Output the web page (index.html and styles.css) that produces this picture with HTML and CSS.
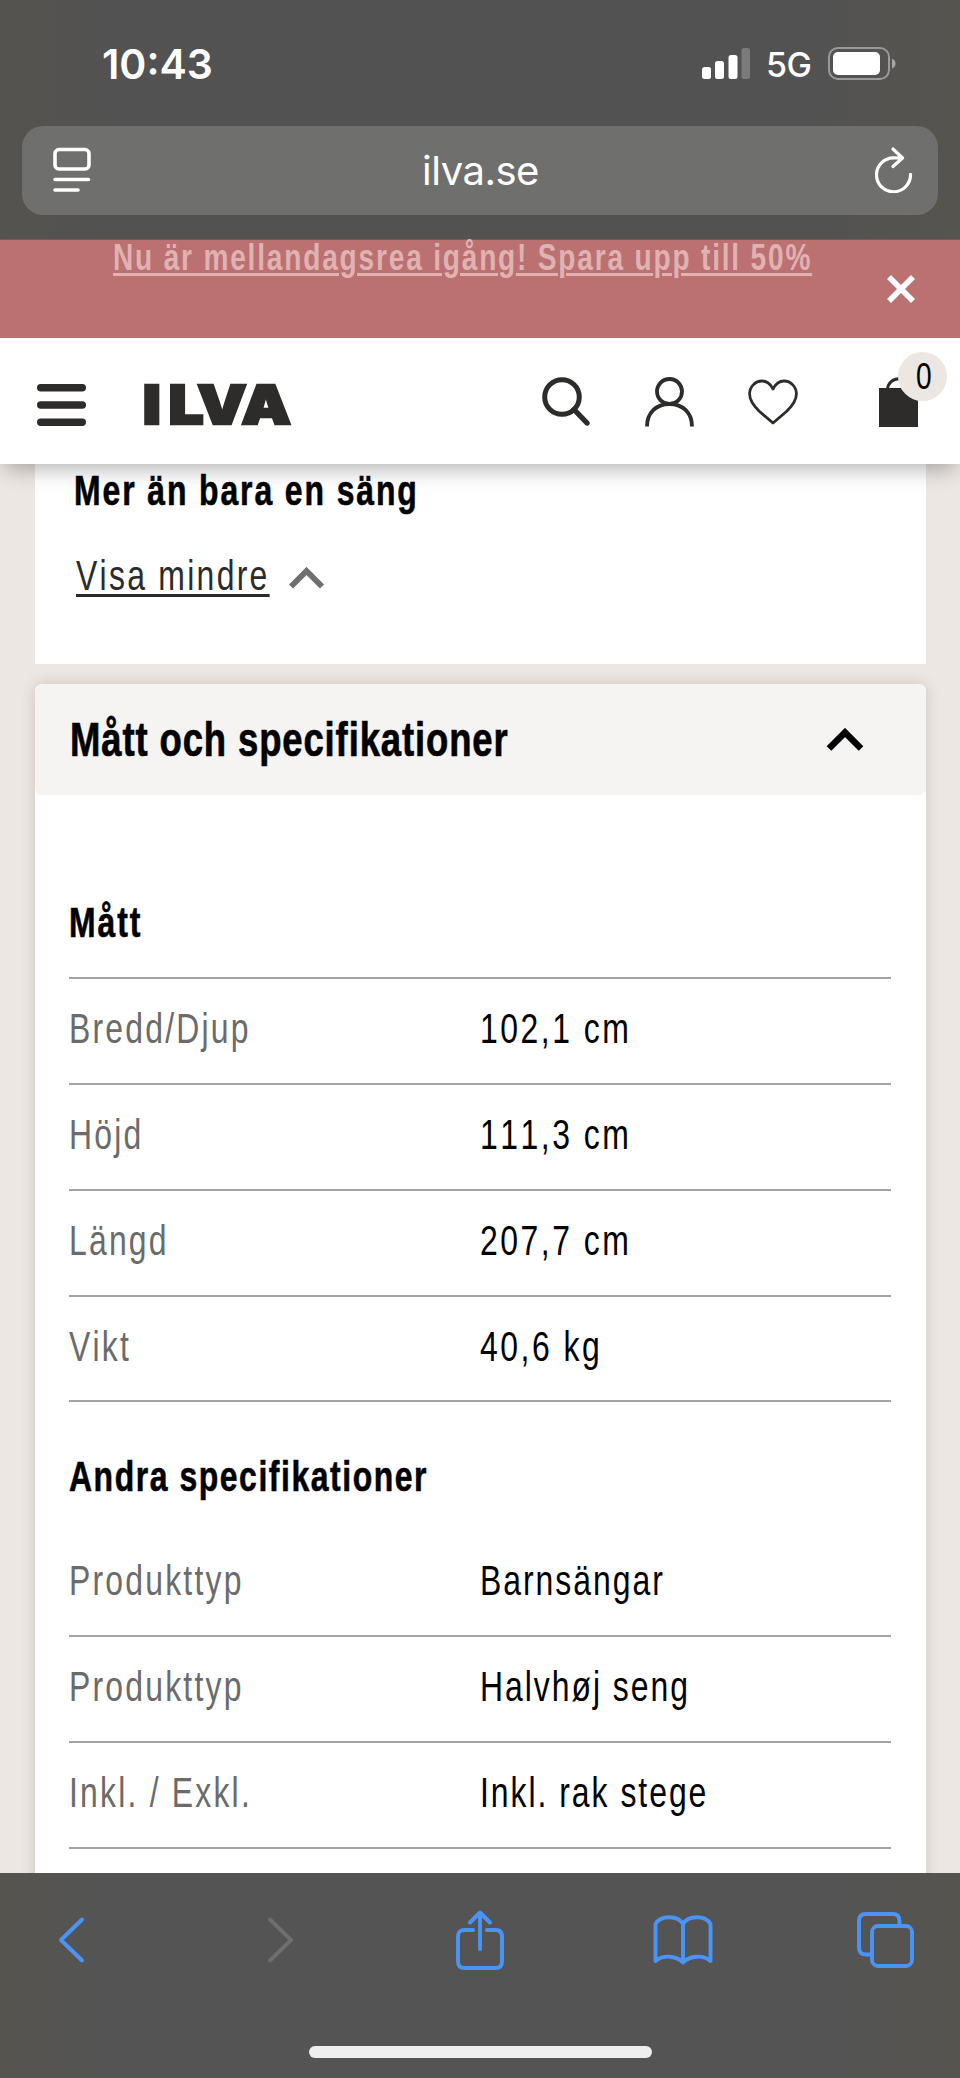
FILE: index.html
```html
<!DOCTYPE html>
<html lang="sv">
<head>
<meta charset="utf-8">
<title>ILVA – Mått och specifikationer</title>
<link rel="stylesheet" href="styles.css">
</head>
<body>
<div class="phone">
  <div class="browser-top">
    <div class="status">
      <span class="clock">10:43</span>
      <svg class="signal" width="49" height="32" viewBox="0 0 49 32">
        <g fill="#fff"><rect x="0" y="19" width="9" height="12" rx="2.5"/><rect x="13" y="13" width="9" height="18" rx="2.5"/><rect x="26.500" y="7" width="9" height="24" rx="2.500"/></g>
        <rect x="39.500" y="0" width="8.500" height="31" rx="2.500" fill="#7b7b7b"/>
      </svg>
      <span class="net">5G</span>
      <svg class="battery" width="68" height="34" viewBox="0 0 68 34">
        <rect x="1" y="1" width="60" height="31" rx="9" fill="none" stroke="#9a9a9a" stroke-width="2"/>
        <rect x="5" y="5" width="47" height="23" rx="5" fill="#fff"/>
        <path d="M64 11.500Q67.500 13 67.500 16.500T64 21.500Z" fill="#a5a5a5"/>
      </svg>
    </div>
    <div class="address">
      <svg width="38" height="46" viewBox="0 0 38 46" fill="none" stroke="#fff" stroke-width="3.600" stroke-linecap="round">
        <rect x="2" y="2.500" width="34" height="19.500" rx="4"/><path d="M2 32.500H35.500M2 43H25"/>
      </svg>
      <span class="url">ilva.se</span>
      <svg width="38" height="46" viewBox="0 0 38 46" fill="none" stroke="#fff" stroke-width="3.200" stroke-linecap="round" stroke-linejoin="round">
        <path d="M35.500 27.300A17 17 0 1 1 18.500 10.800L27 11M18 2L27.500 11L18 19.500"/>
      </svg>
    </div>
  </div>

  <div class="banner">
    <a class="banner-link narrow">Nu är mellandagsrea igång! Spara upp till 50%</a>
    <svg class="banner-close" width="30" height="30" viewBox="0 0 30 30"><path d="M3 3L27 27M27 3L3 27" stroke="#fff" stroke-width="5.600"/></svg>
  </div>

  <header class="header">
    <svg class="menu" width="49" height="42" viewBox="0 0 49 42" stroke="#2d2c2a" stroke-width="7.400" stroke-linecap="round"><path d="M3.700 3.700H45.300M3.700 21H45.300M3.700 38.300H45.300"/></svg>
    <svg class="logo" width="150" height="44" viewBox="0 0 150 44" aria-label="ILVA">
      <text transform="scale(1.15 1)" x="-2 20.500 45.500 84" y="41" class="logo-text">ILVA</text>
    </svg>
    <svg class="search" width="48" height="50" viewBox="0 0 48 50" fill="none" stroke="#2d2c2a"><circle cx="20" cy="20" r="17.300" stroke-width="5"/><path d="M32 32.500L45 46" stroke-width="5.400" stroke-linecap="round"/></svg>
    <svg class="user" width="49" height="50" viewBox="0 0 49 50" fill="none" stroke="#2d2c2a" stroke-width="3.800"><circle cx="24.500" cy="14.500" r="12.500"/><path d="M2 49.500C2 36 11 27 24.500 27S47 36 47 49.500"/></svg>
    <svg class="heart" width="50" height="46" viewBox="0 0 50 46" fill="none" stroke="#2d2c2a" stroke-width="2.800" stroke-linejoin="round"><path d="M25 10C22 4 18 2 14 2C7 2 1.600 8 1.600 15C1.600 22 6 27 11 32L25 44L39 32C44 27 48.400 22 48.400 15C48.400 8 43 2 36 2C32 2 28 4 25 10Z"/></svg>
    <div class="cart">
      <svg width="40" height="50" viewBox="0 0 40 50"><path d="M8.500 12C9 6 14 1.700 20 1.700S31 6 31.500 12" fill="none" stroke="#2d2c2a" stroke-width="3"/><rect x="0" y="11" width="39" height="39" fill="#2d2c2a"/></svg>
      <span class="badge"><span class="narrow badge-num">0</span></span>
    </div>
  </header>

  <main class="content">
    <section class="intro">
      <h3 class="heading narrow">Mer än bara en säng</h3>
      <div class="toggle">
        <a class="toggle-link narrow">Visa mindre</a>
        <svg class="toggle-arrow" width="36" height="22" viewBox="0 0 36 22"><path d="M2 19.500L17.500 4L33 19.500" fill="none" stroke="#6f6f6f" stroke-width="5.800"/></svg>
      </div>
    </section>
    <section class="specs">
      <div class="specs-head">
        <h2 class="specs-title narrow">Mått och specifikationer</h2>
        <svg width="38" height="24" viewBox="0 0 38 24"><path d="M3 20.500L19 4.500L35 20.500" fill="none" stroke="#000" stroke-width="6.600"/></svg>
      </div>
      <div class="specs-body">
        <h3 class="heading first narrow">Mått</h3>
        <dl class="table ruled">
          <div class="row"><dt><span class="narrow">Bredd/Djup</span></dt><dd><span class="narrow">102,1 cm</span></dd></div>
          <div class="row"><dt><span class="narrow">Höjd</span></dt><dd><span class="narrow">111,3 cm</span></dd></div>
          <div class="row"><dt><span class="narrow">Längd</span></dt><dd><span class="narrow">207,7 cm</span></dd></div>
          <div class="row"><dt><span class="narrow">Vikt</span></dt><dd><span class="narrow">40,6 kg</span></dd></div>
        </dl>
        <h3 class="heading second narrow">Andra specifikationer</h3>
        <dl class="table">
          <div class="row"><dt><span class="narrow">Produkttyp</span></dt><dd><span class="narrow">Barnsängar</span></dd></div>
          <div class="row"><dt><span class="narrow">Produkttyp</span></dt><dd><span class="narrow">Halvhøj seng</span></dd></div>
          <div class="row"><dt><span class="narrow">Inkl. / Exkl.</span></dt><dd><span class="narrow">Inkl. rak stege</span></dd></div>
        </dl>
      </div>
    </section>
  </main>

  <nav class="toolbar">
    <div class="tools">
      <svg width="27" height="46" viewBox="0 0 27 46"><path d="M24 2.500L3 23L24 43.500"/></svg>
      <svg class="forward" width="27" height="46" viewBox="0 0 27 46"><path d="M3 2.500L24 23L3 43.500"/></svg>
      <svg class="share" width="48" height="60" viewBox="0 0 48 60"><path d="M17 20H8.500Q2 20 2 26.500V51.500Q2 58 8.500 58H39.500Q46 58 46 51.500V26.500Q46 20 39.500 20H31M24 39V3M14 12.500L24 2.500L34 12.500"/></svg>
      <svg class="book" width="60" height="50" viewBox="0 0 60 50"><path d="M30 9C25 .5 8 -.5 2.500 9V46C9 40 23 40 30 47.500C37 40 51 40 57.500 46V9C52 -.5 35 .5 30 9V47"/></svg>
      <svg class="tabs" width="57" height="56" viewBox="0 0 57 56"><rect x="15" y="14" width="40" height="40" rx="6"/><path d="M15 42.500H9Q2 42.500 2 35.500V9Q2 2 9 2H35.500Q42.500 2 42.500 9V14"/></svg>
    </div>
    <div class="home"></div>
  </nav>
</div>
</body>
</html>
```
FILE: styles.css
```css
* { box-sizing: border-box; }
body { margin: 0; background: #ece7e3; font-family: "Liberation Sans", Arial, sans-serif; }
svg { display: block; flex: none; }
h2, h3, dl, dd { margin: 0; }

.phone { width: 960px; height: 2078px; display: flex; flex-direction: column; overflow: hidden; }

/* Condensed lettering: glyphs are squeezed horizontally from the left edge */
.narrow {
  display: inline-block;
  width: max-content;
  white-space: nowrap;
  transform: scaleX(.76);
  transform-origin: 0 50%;
  letter-spacing: 2.6px;
  font-kerning: none;
}

.browser-top {
  height: 240px; flex: none; padding: 0 22px;
  background: linear-gradient(90deg, #55534f 0, #525252 12%, #525252 84%, #56544f 100%);
  border-bottom: 1px solid #75595b;
  color: #fff; font-family: Inter, sans-serif;
}
.status { height: 125.500px; padding: 0 42px 0 80px; display: flex; align-items: flex-start; }
.clock { font-size: 41px; font-weight: 600; line-height: 50px; margin-top: 39px; }
.signal { margin: 48px 0 0 auto; }
.net { width: 44px; margin: 44px 18px 0 15px; font-size: 34px; font-weight: 500; line-height: 42px; white-space: nowrap; letter-spacing: -.5px; }
.battery { margin-top: 47px; }
.address {
  height: 89.500px; padding: 0 25px 0 31px; border-radius: 21px; background: #6f6f6e;
  display: flex; align-items: center; justify-content: space-between;
}
.url { font-size: 40px; line-height: 50px; letter-spacing: -.5px; margin: 2px 5px 0 0; }

.banner { position: relative; z-index: 2; height: 98px; flex: none; background: #bb7071; display: flex; justify-content: space-between; padding: 0 44px 0 113px; }
.banner-link {
  width: 700px; height: 40px; margin-top: -3px;
  font-size: 37px; font-weight: 700; line-height: 42px; color: #e0b2b2; letter-spacing: 2.350px;
  text-decoration: underline; text-decoration-thickness: 2.500px; text-underline-offset: 3px;
}
.banner-close { margin-top: 34px; }

.header {
  position: relative; z-index: 1; height: 125.500px; flex: none; background: #fff;
  display: flex; align-items: flex-start; padding: 39px 38px 0 37px;
  box-shadow: 0 10px 20px -5px rgba(0, 0, 0, .3);
}
.menu { margin-top: 7px; }
.logo { margin: 6px 0 0 59px; overflow: visible; }
.logo-text { font: 900 54px Inter, sans-serif; fill: #2d2c2a; stroke: #2d2c2a; stroke-width: 2.500px; }
.search { margin-left: 247px; }
.user { margin-left: 55px; }
.heart { margin: 2px 0 0 54px; }
.cart { position: relative; margin-left: 81px; }
.badge {
  position: absolute; left: 19px; top: -25px; width: 49px; height: 49px;
  border-radius: 50%; background: #ece7e3; padding-left: 18px;
}
.badge-num { font-size: 37px; line-height: 49px; }

.content { flex: 1; min-height: 0; overflow: hidden; background: #ece7e3; padding: 0 34.500px; }
.intro { height: 200.500px; background: #fff; padding: 2px 42px 0 39.500px; }
.heading { display: block; font-size: 42px; line-height: 50px; font-weight: 700; color: #000; letter-spacing: 2.500px; -webkit-text-stroke: .6px #000; }
.toggle { display: flex; margin-top: 35.500px; padding-left: 2px; }
.toggle-link {
  width: 213px; font-size: 42px; line-height: 50px; color: #2b2b2b; letter-spacing: 3px;
  text-decoration: underline; text-decoration-thickness: 2.500px; text-underline-offset: 4px;
}
.toggle-arrow { margin-top: 16px; }

.specs { margin-top: 20px; height: 1300px; background: #fff; border-radius: 7px; box-shadow: 0 0 14px rgba(80, 60, 45, .2); }
.specs-head {
  height: 111px; background: #f6f4f2; border-radius: 7px; padding: 0 62px 0 35px;
  display: flex; align-items: center; justify-content: space-between;
}
.specs-title { font-size: 48px; line-height: 60px; color: #000; letter-spacing: 1.150px; -webkit-text-stroke: .7px #000; }
.specs-body { padding: 0 34.500px; }
.heading.first { padding-top: 103px; height: 182px; }
.heading.second { height: 79px; margin-top: 50px; letter-spacing: 2.050px; }
.table { display: block; }
.ruled { border-top: 2px solid #a3a3a3; }
.row {
  display: grid; grid-template-columns: 1fr 1fr; height: 105.850px;
  border-bottom: 2px solid #a3a3a3; font-size: 42px; line-height: 100px;
}
dt { color: #6b6b6b; }
dt .narrow { letter-spacing: 2.900px; }
dd { color: #000; }
.ruled dd .narrow { letter-spacing: 3.300px; }

.toolbar { height: 205.500px; flex: none; background: linear-gradient(90deg, #56544f 0, #545454 10%, #545454 88%, #56544f 100%); }
.tools { height: 134px; padding-left: 58px; display: flex; align-items: center; }
.tools svg { fill: none; stroke: #4a94f8; stroke-width: 3.900; stroke-linecap: round; stroke-linejoin: round; }
.tools .forward { stroke: #6e6e6e; margin-left: 182px; }
.share { margin-left: 162px; }
.book { margin-left: 149px; }
.tabs { margin-left: 144px; }
.home { width: 343px; height: 12px; margin: 39px auto 0; border-radius: 6px; background: #eee; }
```
